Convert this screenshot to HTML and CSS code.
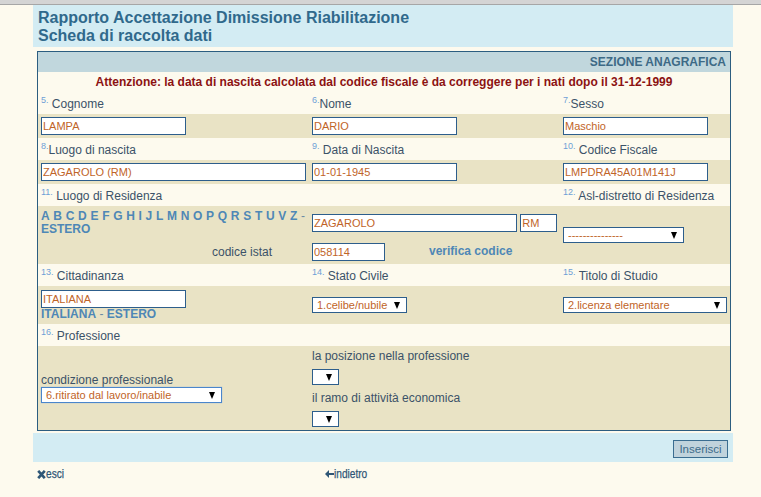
FILE: index.html
```html
<!DOCTYPE html>
<html lang="it">
<head>
<meta charset="utf-8">
<title>Rapporto Accettazione Dimissione Riabilitazione</title>
<link rel="stylesheet" href="styles.css">
</head>
<body>
<div class="topbar"></div>
<div class="page">
  <div class="dotted head">
    <h1 class="title">Rapporto Accettazione Dimissione Riabilitazione<br>Scheda di raccolta dati</h1>
  </div>
  <table class="form">
    <colgroup><col class="c1"><col class="c2"><col class="c3"></colgroup>
    <tr class="sec"><th colspan="3">SEZIONE ANAGRAFICA</th></tr>
    <tr class="warn"><td colspan="3">Attenzione: la data di nascita calcolata dal codice fiscale è da correggere per i nati dopo il 31-12-1999</td></tr>
    <tr class="lbl"><td><sup>5.</sup> Cognome</td><td><sup>6.</sup>Nome</td><td><sup>7.</sup>Sesso</td></tr>
    <tr class="inp"><td><input class="fld w145" value="LAMPA"></td><td><input class="fld w145" value="DARIO"></td><td><input class="fld w145" value="Maschio"></td></tr>
    <tr class="lbl"><td><sup>8.</sup>Luogo di nascita</td><td><sup>9.</sup> Data di Nascita</td><td><sup>10.</sup> Codice Fiscale</td></tr>
    <tr class="inp"><td><input class="fld w265" value="ZAGAROLO (RM)"></td><td><input class="fld w145" value="01-01-1945"></td><td><input class="fld w145" value="LMPDRA45A01M141J"></td></tr>
    <tr class="lbl"><td><sup>11.</sup> Luogo di Residenza</td><td></td><td><sup>12.</sup> Asl-distretto di Residenza</td></tr>
    <tr class="resA">
      <td class="letters"><a href="#">A</a> <a href="#">B</a> <a href="#">C</a> <a href="#">D</a> <a href="#">E</a> <a href="#">F</a> <a href="#">G</a> <a href="#">H</a> <a href="#">I</a> <a href="#">J</a> <a href="#">L</a> <a href="#">M</a> <a href="#">N</a> <a href="#">O</a> <a href="#">P</a> <a href="#">Q</a> <a href="#">R</a> <a href="#">S</a> <a href="#">T</a> <a href="#">U</a> <a href="#">V</a> <a href="#">Z</a> <span class="sep">-</span><br><a href="#">ESTERO</a></td>
      <td><input class="fld w205" value="ZAGAROLO"> <input class="fld w37" value="RM"></td>
      <td rowspan="2"><span class="sel w121"><select><option>---------------</option></select></span></td>
    </tr>
    <tr class="resB">
      <td class="istat">codice istat</td>
      <td><input class="fld w73" value="058114"><a class="link verify" href="#">verifica codice</a></td>
    </tr>
    <tr class="lbl"><td><sup>13.</sup> Cittadinanza</td><td><sup>14.</sup> Stato Civile</td><td><sup>15.</sup> Titolo di Studio</td></tr>
    <tr class="citt">
      <td><input class="fld w145 blk" value="ITALIANA"><div class="natline"><a href="#">ITALIANA</a> <span class="sep">-</span> <a href="#">ESTERO</a></div></td>
      <td><span class="sel w95"><select><option>1.celibe/nubile</option></select></span></td>
      <td><span class="sel w164"><select><option>2.licenza elementare</option></select></span></td>
    </tr>
    <tr class="lbl"><td><sup>16.</sup> Professione</td><td></td><td></td></tr>
    <tr class="prof">
      <td><div class="line">condizione professionale</div><span class="sel w181 blk focus"><select><option>6.ritirato dal lavoro/inabile</option></select></span></td>
      <td><div class="line">la posizione nella professione</div><span class="sel w27 blk gap"><select><option></option></select></span><div class="line">il ramo di attività economica</div><span class="sel w27 blk gapt"><select><option></option></select></span></td>
      <td></td>
    </tr>
  </table>
  <div class="dotted actions"><button class="btn" type="button">Inserisci</button></div>
  <div class="footer">
    <a class="nav esci" href="#"><svg class="ico" width="9" height="9" viewBox="0 0 9 9"><path d="M1.2 0.8 L7.8 8.2 M7.8 0.8 L1.2 8.2" stroke="#2f5676" stroke-width="2.6" fill="none"/></svg><span class="nt">esci</span></a>
    <a class="nav" href="#"><svg class="ico" width="9" height="8" viewBox="0 0 9 8"><polygon points="0,4 4,0 4,8" fill="#2f5676"/><rect x="4" y="3" width="5" height="2" fill="#2f5676"/></svg><span class="nt">indietro</span></a>
  </div>
</div>
</body>
</html>
```

FILE: styles.css
```css
html, body {
  margin: 0;
  padding: 0;
}
body {
  background: #fdfaee;
  font-family: "Liberation Sans", Arial, sans-serif;
  font-size: 12px;
  color: #3b5268;
}
.topbar {
  height: 4px;
  background: #d4d4d4;
  border-bottom: 1px solid #a6a6a6;
}
.page {
  width: 700px;
  margin-left: 33px;
}
.dotted {
  background-color: #d3ecf3;
}
.title {
  margin: 0;
  padding: 4px 0 2px 5px;
  font-size: 16px;
  line-height: 18px;
  font-weight: bold;
  color: #30698c;
}
.form {
  width: 694px;
  table-layout: fixed;
  border: 1px solid #2c5d80;
  border-collapse: separate;
  border-spacing: 0;
  margin: 4px 0 2px 4px;
}
.c1 { width: 271px; }
.c2 { width: 251px; }
.c3 { width: 170px; }
.form td, .form th {
  padding: 0 3px;
  vertical-align: middle;
  white-space: nowrap;
}
.sec { height: 20px; }
.sec th {
  background: #c1d7dd;
  text-align: right;
  padding-right: 4px;
  font-weight: bold;
  font-size: 12px;
  color: #3d6a86;
}
.warn { height: 20px; }
.warn td {
  text-align: center;
  font-weight: bold;
  color: #8c1212;
}
.lbl { height: 22px; }
.lbl td { padding-top: 1px; }
.inp { height: 24px; }
.inp td, .resA td, .resB td, .citt td, .prof td { background: #e9e3c5; }
.resA { height: 34px; }
.resB { height: 24px; }
.citt { height: 38px; }
.prof { height: 84px; }
sup {
  font-size: 9px;
  line-height: 0;
  vertical-align: 5px;
  color: #6f9fd6;
}
.fld {
  box-sizing: border-box;
  height: 18px;
  margin: 0;
  padding: 0 1px;
  border: 1px solid #2d5e8c;
  background: #fff;
  font-family: "Liberation Sans", Arial, sans-serif;
  font-size: 11px;
  color: #bf6428;
  vertical-align: middle;
  outline: none;
}
.w145 { width: 145px; }
.w265 { width: 265px; }
.w205 { width: 205px; }
.w37 { width: 37px; }
.w73 { width: 73px; }
.w121 { width: 121px; }
.w95 { width: 95px; }
.w164 { width: 164px; }
.w181 { width: 181px; }
.w27 { width: 27px; }
.blk { display: block; }
a {
  text-decoration: none;
  color: #4e87b6;
  font-weight: bold;
}
.letters {
  line-height: 13px;
  word-spacing: 0.35px;
}
.sep {
  font-weight: normal;
  color: #6b8aa4;
}
.istat {
  text-align: right;
  padding-right: 37px !important;
}
.verify { margin-left: 44px; }
.natline { line-height: 13px; }
.line { line-height: 14px; }
.sel {
  display: inline-block;
  position: relative;
  vertical-align: middle;
}
.sel.blk { display: block; }
.sel select {
  display: block;
  box-sizing: border-box;
  width: 100%;
  height: 16px;
  margin: 0;
  padding: 0 14px 0 4px;
  border: 1px solid #2d5e8c;
  border-radius: 0;
  background: #fff;
  -webkit-appearance: none;
  appearance: none;
  font-family: "Liberation Sans", Arial, sans-serif;
  font-size: 11px;
  line-height: 14px;
  color: #bf6428;
  outline: none;
}
.sel::after {
  content: "";
  position: absolute;
  right: 7px;
  top: 50%;
  margin-top: -3px;
  width: 0;
  height: 0;
  border-left: 3px solid transparent;
  border-right: 3px solid transparent;
  border-top: 7px solid #000;
  pointer-events: none;
}
.focus select {
  border-color: #4a86cc;
  box-shadow: 0 0 1px #8fb4e0;
}
.gap { margin: 6px 0; }
.gapt { margin-top: 6px; }
.actions {
  display: flex;
  justify-content: flex-end;
  padding: 7px 5px 4px;
}
.btn {
  box-sizing: border-box;
  width: 55px;
  height: 18px;
  margin: 0;
  padding: 0;
  border: 1px solid #3a6d90;
  background: #c0d3dc;
  font-family: "Liberation Sans", Arial, sans-serif;
  font-size: 11.5px;
  color: #3c6b8a;
}
.footer {
  display: flex;
  padding: 5px 0 0 4px;
  line-height: 14px;
}
.nav {
  display: flex;
  align-items: center;
  font-weight: normal;
  font-size: 13px;
  color: #2f5676;
}
.nt {
  display: inline-block;
  transform: scaleX(0.78);
  transform-origin: 0 50%;
  -webkit-text-stroke: 0.25px #2f5676;
}
.esci { width: 288px; }
.ico { display: block; }
```
